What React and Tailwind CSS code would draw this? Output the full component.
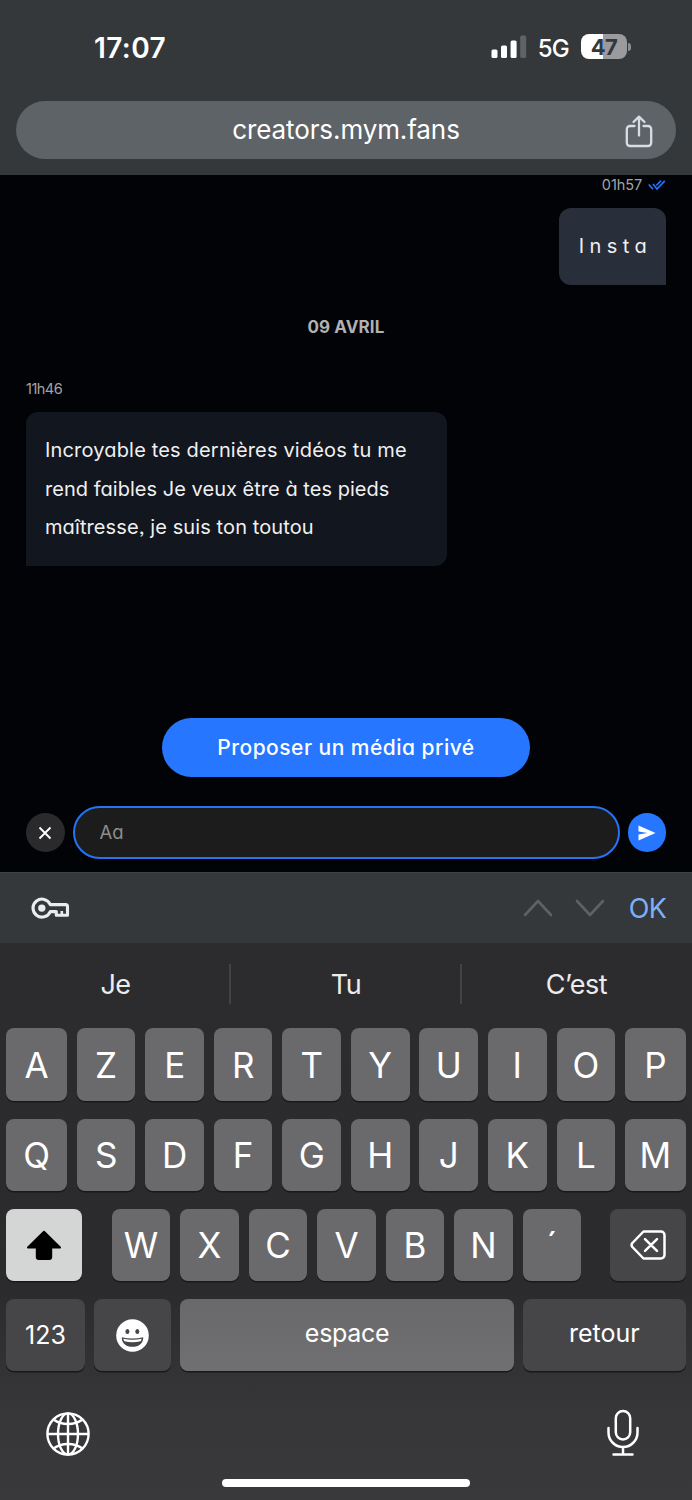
import React from "react";

const geo = "font-['Inter',sans-serif] [font-feature-settings:'cv11','ss03']";

function Key({ children, className = "", tone = "bg-[#6a6a6c]" }) {
  return (
    <div
      className={`flex h-[72.5px] items-center justify-center rounded-[8px] shadow-[0_1.5px_0_#19191a] ${tone} ${className}`}
    >
      {children}
    </div>
  );
}

function LetterRow({ letters }) {
  return (
    <div className="flex justify-between">
      {letters.map((l, i) => (
        <Key
          key={l}
          className={i === 0 || i === letters.length - 1 ? "w-[60.5px]" : "w-[58.6px]"}
        >
          <Letter>{l}</Letter>
        </Key>
      ))}
    </div>
  );
}

function Letter({ children }) {
  return <span className="pt-px text-[35px] leading-none text-white">{children}</span>;
}

function StatusBar() {
  return (
    <div className="flex h-[101px] items-start justify-between pr-[61px] pl-[94px]">
      <div className="pt-[33.5px] text-[28px] leading-[28px] font-semibold tracking-[0.4px] text-white">
        17:07
      </div>
      <div className="flex items-center pt-[32px]">
        <svg width="36" height="24" viewBox="0 0 36 24">
          <rect x="0.5" y="14.5" width="6" height="8.5" rx="1.5" fill="#fff" />
          <rect x="10" y="10.5" width="6" height="12.5" rx="1.5" fill="#fff" />
          <rect x="19.6" y="5.5" width="6" height="17.5" rx="1.5" fill="#fff" />
          <rect x="29.2" y="0.5" width="6" height="22.5" rx="1.5" fill="#606365" />
        </svg>
        <span className="ml-[11px] pt-[5px] text-[24px] leading-[24px] font-medium tracking-[-0.8px] text-white">
          5G
        </span>
        <div className="ml-[12px] flex h-[25px] w-[46px] items-center justify-center rounded-[8px] bg-[linear-gradient(to_right,#fff_47%,#9b9b9d_47%)] text-[22px] leading-none font-bold tracking-[-0.5px] text-[#34383a]">
          47
        </div>
        <div className="ml-px h-[8px] w-[3px] rounded-r-full bg-[#8c8e8f]" />
      </div>
    </div>
  );
}

function AddressBar() {
  return (
    <div className="mx-[16px] flex h-[58px] items-center rounded-full bg-[#5e6367]">
      <div className="w-[60px]" />
      <div className="flex-1 text-center text-[26px] leading-none tracking-[-0.1px] text-white">
        creators.mym.fans
      </div>
      <div className="flex w-[60px] pt-[3px] pl-[8.5px]">
        <svg width="28" height="34" viewBox="0 0 28 34" fill="none" stroke="#d9dce3" strokeWidth="2.3" strokeLinecap="round" strokeLinejoin="round">
          <path d="M9.5 11H5a3.2 3.2 0 0 0-3.2 3.2v13.6A3.2 3.2 0 0 0 5 31h18a3.2 3.2 0 0 0 3.2-3.2V14.2a3.2 3.2 0 0 0-3.2-3.2h-4.5" />
          <path d="M14 20.5V2M8.5 7 14 1.7l5.5 5.3" />
        </svg>
      </div>
    </div>
  );
}

function Chat() {
  return (
    <div className={`flex h-[697px] flex-col bg-[#020307] px-[26px] ${geo}`}>
      <div className="flex h-[32.5px] justify-end pt-[2px]">
        <span className="text-[14.5px] leading-[15px] tracking-[-0.1px] text-[#a3a3a5]">01h57</span>
        <svg className="mt-[2px] ml-[6px]" width="18" height="14" viewBox="0 0 18 14" fill="none" stroke="#2474ff" strokeWidth="1.7">
          <path d="M.8 5.5 5 10.2M8.3 6.5 13 1.7M5 5l4 5L16.8 1.8" />
        </svg>
      </div>
      <div className="flex h-[77px] w-[107px] items-center justify-center self-end rounded-[12px] rounded-br-none bg-[#292e3b] pl-[6px] text-[20px] tracking-[5.4px] text-[#f0f0f2]">
        Insta
      </div>
      <div className="mt-[32.5px] text-center text-[17px] leading-[20px] font-bold tracking-[0.1px] text-[#b1b1b2]">
        09 AVRIL
      </div>
      <div className="mt-[44px] text-[14.5px] leading-[15px] tracking-[-0.5px] text-[#a3a3a5]">11h46</div>
      <div className="mt-[16px] h-[154px] w-[421px] rounded-[12px] rounded-bl-none bg-[#12161e] pt-[19px] pl-[19px] text-[20px] leading-[38.6px] whitespace-nowrap text-[#f0f0f1]">
        <div className="tracking-[0.17px]">Incroyable tes dernières vidéos tu me</div>
        <div className="tracking-[0.03px]">rend faibles Je veux être à tes pieds</div>
        <div className="tracking-[0.1px]">maîtresse, je suis ton toutou</div>
      </div>
      <div className="mt-[152px] flex h-[59px] w-[368px] items-center justify-center self-center rounded-full bg-[#2776ff] text-[21px] font-medium tracking-[0.48px] text-white">
        Proposer un média privé
      </div>
      <div className="mt-[29px] flex items-center justify-between">
        <div className="flex size-[38.5px] items-center justify-center rounded-full bg-[#2a2a2c]">
          <svg width="14" height="14" viewBox="0 0 14 14" stroke="#fff" strokeWidth="1.9">
            <path d="M1.5 1.5l11 11M12.5 1.5l-11 11" />
          </svg>
        </div>
        <div className="flex h-[53px] w-[547px] items-center rounded-full border-2 border-[#2474f5] bg-[#1c1c1c] pl-[25px] text-[18.5px] text-[#8c8c8c]">
          Aa
        </div>
        <div className="flex size-[38.5px] items-center justify-center rounded-full bg-[#2776ff]">
          <svg width="18" height="16" viewBox="0 0 18 16" fill="#fff">
            <path d="M.5.5 17.5 8 .5 15.5V9.4L9.5 8 .5 6.6Z" />
          </svg>
        </div>
      </div>
    </div>
  );
}

function AccessoryBar() {
  return (
    <div className="flex h-[71px] items-center border-t border-[#404345] bg-[#34383a] pr-[26px] pl-[31px]">
      <svg width="39" height="22" viewBox="0 0 39 22" fill="none" stroke="#e9edef" strokeWidth="3.1" strokeLinejoin="round">
        <path d="M19.3 7.6H34.5a2 2 0 0 1 2 2V18.2H25.3V14.6H19.3A9 9 0 1 1 19.3 7.6Z" />
        <circle cx="10.8" cy="11.1" r="3.7" fill="#e9edef" stroke="none" />
        <path d="M30.8 18v-4" strokeWidth="2.6" />
      </svg>
      <svg className="ml-auto" width="30" height="18" viewBox="0 0 30 18" fill="none" stroke="#5f6163" strokeWidth="2.6" strokeLinecap="round" strokeLinejoin="round">
        <path d="M2 16 15 2l13 14" />
      </svg>
      <svg className="ml-[22px]" width="30" height="18" viewBox="0 0 30 18" fill="none" stroke="#5f6163" strokeWidth="2.6" strokeLinecap="round" strokeLinejoin="round">
        <path d="M2 2 15 16 28 2" />
      </svg>
      <span className="ml-[24px] text-[27px] leading-none tracking-[-0.8px] text-[#7db0f8]">OK</span>
    </div>
  );
}

function Suggestions() {
  return (
    <div className="flex h-[85px] items-center pb-[3px] text-[27px] leading-none tracking-[-0.5px] text-[#ececed]">
      <div className="w-[229px] pt-px pl-[2px] text-center">Je</div>
      <div className="h-[40px] w-[2px] bg-[#434345]" />
      <div className="w-[229px] pt-px pl-px text-center">Tu</div>
      <div className="h-[40px] w-[2px] bg-[#434345]" />
      <div className="w-[230px] pt-px pr-px text-center">C’est</div>
    </div>
  );
}

function Keyboard() {
  return (
    <div className="flex h-[557px] flex-col bg-[linear-gradient(to_bottom,#2c2c2e_0%,#2b2b2d_62%,#373739_85%,#39393b_100%)]">
      <Suggestions />
      <div className="flex flex-col gap-[17.7px] px-[6.4px] pt-[0.4px]">
        <LetterRow letters={["A", "Z", "E", "R", "T", "Y", "U", "I", "O", "P"]} />
        <LetterRow letters={["Q", "S", "D", "F", "G", "H", "J", "K", "L", "M"]} />
        <div className="flex justify-between">
          <Key tone="bg-[#d4d5d5]" className="w-[75.5px]">
            <svg width="36" height="30" viewBox="0 0 36 30" fill="#000" stroke="#000" strokeWidth="2" strokeLinejoin="round">
              <path d="M18 1.8 34 17.5H25.2V27a2 2 0 0 1-2 2H12.8a2 2 0 0 1-2-2V17.5H2Z" />
            </svg>
          </Key>
          <div className="flex gap-[9.9px] pl-px">
            {["W", "X", "C", "V", "B", "N", "´"].map((l) => (
              <Key key={l} className="w-[58.6px]">
                <Letter>{l}</Letter>
              </Key>
            ))}
          </div>
          <Key tone="bg-[#464648]" className="w-[75.5px]">
            <svg width="36" height="30" viewBox="0 0 36 30" fill="none" stroke="#fff" strokeWidth="2.5" strokeLinecap="round" strokeLinejoin="round">
              <path d="M13.5 1.5H31A3.5 3.5 0 0 1 34.5 5V25A3.5 3.5 0 0 1 31 28.5H13.5L2.4 17a2.8 2.8 0 0 1 0-4ZM15 9.2l12 11.6M27 9.2 15 20.8" />
            </svg>
          </Key>
        </div>
        <div className="flex">
          <Key tone="bg-[#464648]" className="w-[78.3px] pt-[1px] text-[25px] leading-none text-white">
            123
          </Key>
          <Key tone="bg-[#464648]" className="ml-[9.3px] w-[77.5px]">
            <svg width="33" height="33" viewBox="0 0 33 33">
              <circle cx="16.5" cy="16.5" r="16.3" fill="#fff" />
              <ellipse cx="11.4" cy="12.6" rx="2" ry="2.5" fill="#464648" />
              <ellipse cx="21.3" cy="12.6" rx="2" ry="2.5" fill="#464648" />
              <path d="M5.8 18.2c7 1.6 14.400 1.600 21.400 0 .3 6-4.500 9.600-10.700 9.600S5.500 24.200 5.800 18.200Z" fill="#464648" />
              <path d="M7.300 19.700c6 1.300 12.400 1.300 18.400 0-.2 1.200-.6 1.900-1.200 2.600-5 1.300-11 1.300-16 0-.6-.7-1-1.400-1.200-2.600Z" fill="#fff" />
            </svg>
          </Key>
          <Key tone="bg-[linear-gradient(#69696b,#707072)]" className="ml-[8.3px] w-[334.6px] pb-[3px] text-[25px] leading-none tracking-[-0.3px] text-white">
            espace
          </Key>
          <Key tone="bg-[#464648]" className="ml-auto w-[162.6px] pb-[3px] text-[25px] leading-none text-white">
            retour
          </Key>
        </div>
      </div>
      <div className="flex items-center justify-between px-[46px] pt-[40.5px]">
        <svg width="44" height="44" viewBox="0 0 44 44" fill="none" stroke="#fff" strokeWidth="2.4">
          <circle cx="22" cy="22" r="20.6" />
          <path d="M22 1.4V42.6M1.4 22H42.6" />
          <ellipse cx="22" cy="22" rx="10" ry="20.6" />
          <path d="M7.5 7.5C15.5 13.5 28.5 13.5 36.5 7.5M7.5 36.5C15.5 30.5 28.5 30.5 36.5 36.5" />
        </svg>
        <svg className="-mt-[3px] mr-[7px]" width="32" height="48" viewBox="0 0 32 48" fill="none" stroke="#fff" strokeWidth="2.5" strokeLinecap="round">
          <rect x="8.8" y="2" width="14.4" height="28.5" rx="7.2" />
          <path d="M1.5 19v4.500a14.500 14.500 0 0 0 29 0V19M16 38v7.500M6.500 45.500h19" />
        </svg>
      </div>
      <div className="mt-auto mb-[13px] h-[8px] w-[248px] self-center rounded-full bg-white" />
    </div>
  );
}

export default function App() {
  return (
    <div className="flex h-[1500px] w-[692px] flex-col overflow-hidden bg-[#020307] font-['Inter',sans-serif]">
      <div className="h-[175px] shrink-0 bg-[#34383a]">
        <StatusBar />
        <AddressBar />
      </div>
      <Chat />
      <AccessoryBar />
      <Keyboard />
    </div>
  );
}
